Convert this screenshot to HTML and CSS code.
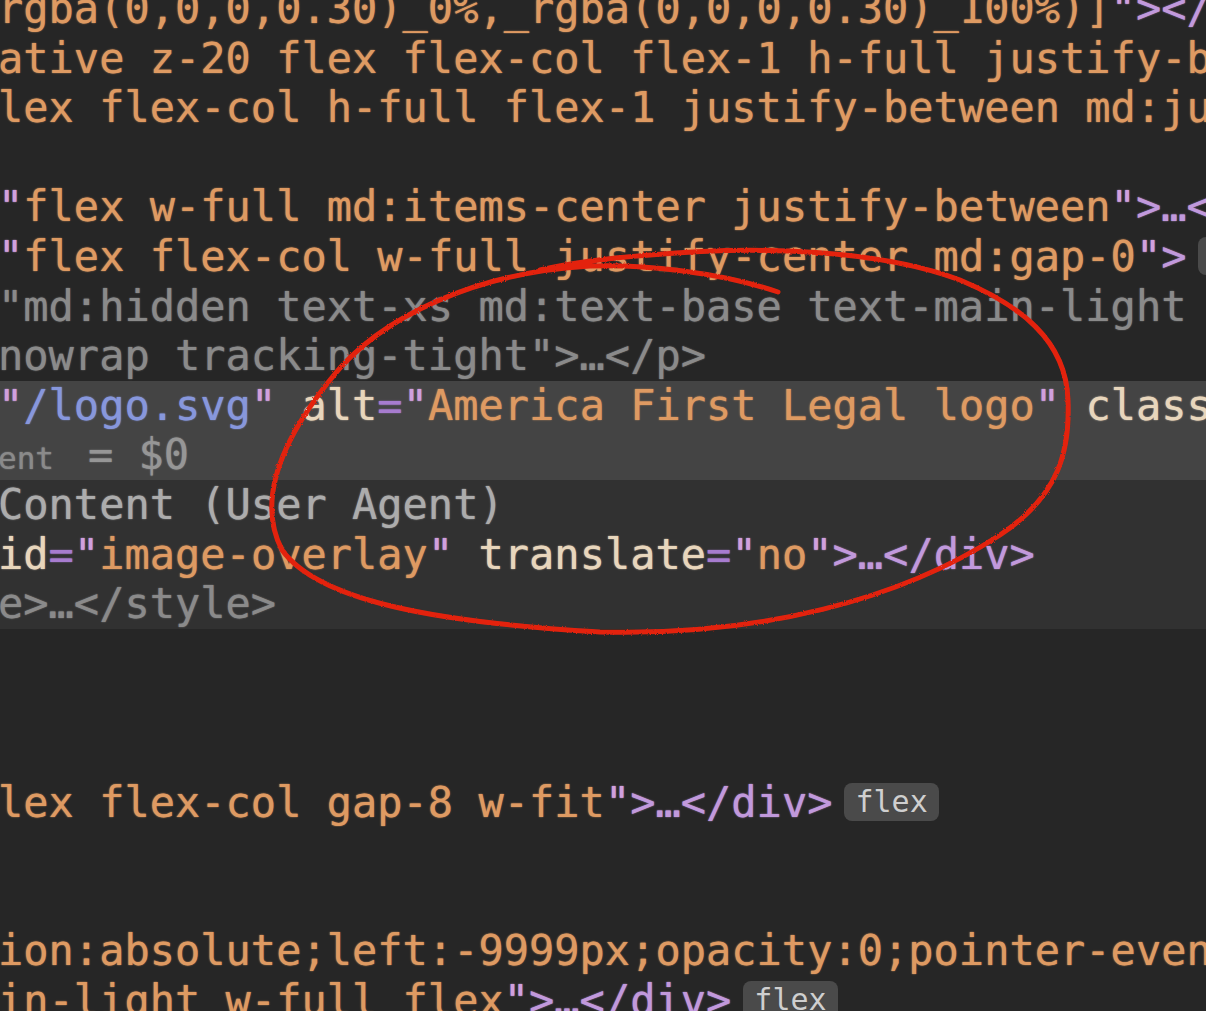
FILE: index.html
```html
<!DOCTYPE html>
<html>
<head>
<meta charset="utf-8">
<link rel="stylesheet" href="styles.css">
</head>
<body>
<div class="panel">
  <div class="row"><span class="v">rgba(0,0,0,0.30)_0%,_rgba(0,0,0,0.30)_100%)]</span><span class="q">"</span><span class="p">&gt;&lt;/div&gt;</span></div>
  <div class="row"><span class="v">ative z-20 flex flex-col flex-1 h-full justify-between</span></div>
  <div class="row"><span class="v">lex flex-col h-full flex-1 justify-between md:justify-center</span></div>
  <div class="row"></div>
  <div class="row"><span class="q">"</span><span class="v">flex w-full md:items-center justify-between</span><span class="q">"</span><span class="p">&gt;…&lt;/div&gt;</span></div>
  <div class="row"><span class="q">"</span><span class="v">flex flex-col w-full justify-center md:gap-0</span><span class="q">"</span><span class="p">&gt;</span><span class="badge">flex</span></div>
  <div class="row"><span class="d">"md:hidden text-xs md:text-base text-main-light whitespace-</span></div>
  <div class="row"><span class="d">nowrap tracking-tight"&gt;…&lt;/p&gt;</span></div>
  <div class="row sel"><span class="q">"</span><span class="u">/logo.svg</span><span class="q">"</span> <span class="n">alt</span><span class="e">=</span><span class="q">"</span><span class="v">America First Legal logo</span><span class="q">"</span> <span class="n">class</span></div>
  <div class="row sel"><span class="d small">ent</span><span class="d dollar">= $0</span></div>
  <div class="row shadow"><span class="g">Content (User Agent)</span></div>
  <div class="row shadow"><span class="n">id</span><span class="e">=</span><span class="q">"</span><span class="v">image-overlay</span><span class="q">"</span> <span class="n">translate</span><span class="e">=</span><span class="q">"</span><span class="v">no</span><span class="q">"</span><span class="p">&gt;…&lt;/div&gt;</span></div>
  <div class="row shadow"><span class="d">e&gt;…&lt;/style&gt;</span></div>
  <div class="row"></div>
  <div class="row"></div>
  <div class="row"></div>
  <div class="row"><span class="v">lex flex-col gap-8 w-fit</span><span class="q">"</span><span class="p">&gt;…&lt;/div&gt;</span><span class="badge">flex</span></div>
  <div class="row"></div>
  <div class="row"></div>
  <div class="row"><span class="v">ion:absolute;left:-9999px;opacity:0;pointer-events:none</span></div>
  <div class="row"><span class="v">in-light w-full flex</span><span class="q">"</span><span class="p">&gt;…&lt;/div&gt;</span><span class="badge">flex</span></div>
</div>
<svg class="annot" width="1206" height="1011" viewBox="0 0 1206 1011">
  <defs>
    <filter id="rough" x="-5%" y="-5%" width="110%" height="110%">
      <feTurbulence type="fractalNoise" baseFrequency="0.9" numOctaves="2" seed="3"/>
      <feDisplacementMap in="SourceGraphic" scale="2.5"/>
    </filter>
  </defs>
  <path filter="url(#rough)" fill="none" stroke="#e3230f" stroke-width="5" stroke-linecap="round" stroke-linejoin="round"
    d="M 778 292 C 720 272, 640 264, 590 266 C 480 272, 380 315, 330 380 C 282 440, 256 500, 282 550 C 318 600, 430 622, 600 632 C 760 636, 900 600, 1000 535 C 1060 495, 1070 450, 1068 400 C 1066 340, 1020 305, 960 280 C 880 250, 760 245, 650 255 C 610 258, 570 263, 540 270"/>
</svg>
</body>
</html>
```

FILE: styles.css
```css
html, body {
  margin: 0;
  padding: 0;
  background: #262626;
  width: 1206px;
  height: 1011px;
  overflow: hidden;
}

.panel {
  margin-top: -16px;
  margin-left: -2px;
  font-family: "DejaVu Sans Mono", "Liberation Mono", monospace;
  font-size: 42px;
  line-height: 49.6px;
  color: #e5995d;
  display: flex;
  flex-direction: column;
  text-shadow: 0 0 1.5px currentColor;
}

.row {
  height: 49.6px;
  white-space: pre;
  overflow: hidden;
}

.row.sel {
  background: #444444;
}

.row.shadow {
  background: #313131;
}

.v { color: #de9a62; }
.n { color: #e8d6bc; }
.q { color: #d0a0de; }
.e { color: #a77ccf; }
.p { color: #c199dc; }
.u { color: #8797dc; }
.d { color: #8a8a8a; }
.g { color: #acacac; }

.small {
  font-size: 31px;
}

.dollar {
  margin-left: 34px;
  color: #969696;
}

.badge {
  display: inline-block;
  vertical-align: middle;
  height: 38px;
  padding: 0 11px;
  margin-top: -6px;
  margin-left: 12px;
  border-radius: 8px;
  background: #4a4a4a;
  color: #cfcfcf;
  font-size: 30px;
  line-height: 38px;
  text-shadow: none;
}

.annot {
  position: absolute;
  left: 0;
  top: 0;
  pointer-events: none;
}
```
